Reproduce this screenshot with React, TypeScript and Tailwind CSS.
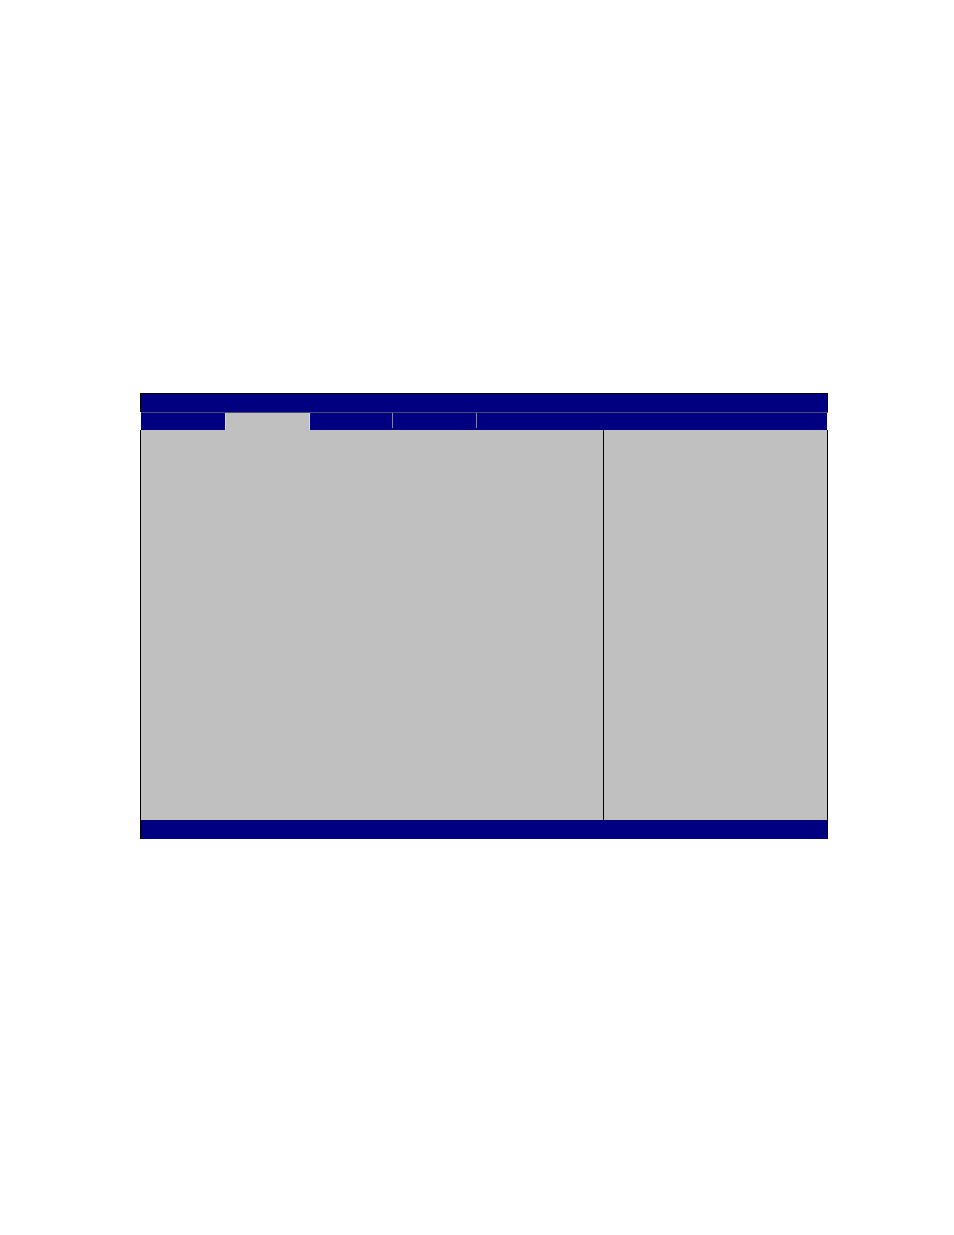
import React from "react";

export default function App() {
  return (
    <div className="w-full h-[1235px] bg-white pt-[393px] pl-[140px]" style={{ fontFamily: '"Liberation Sans", Arial, sans-serif' }}>
      <div className="w-[688px] flex flex-col">
        {/* Title bar */}
        <div className="h-[19px] bg-[#000080] border-t border-l border-r border-black" />
        <div className="h-px bg-[#4a4a70] ml-px" />
        {/* Tab row */}
        <div className="h-[17px] bg-[#000080] flex ml-px mr-px">
          <div className="w-[84px] h-full" />
          <div className="w-[85px] h-full bg-[#c0c0c0] border-l border-r border-[#dcdcdc]" />
          <div className="w-[82px] h-full" />
          <div className="w-px h-[15px] bg-[#7f7fbf]" />
          <div className="w-[83px] h-full" />
          <div className="w-px h-[15px] bg-[#7f7fbf]" />
          <div className="flex-1 h-full" />
        </div>
        {/* Body */}
        <div className="h-[390px] bg-[#c0c0c0] border-l border-r border-black flex">
          <div className="w-[463px] h-full border-r border-black" />
          <div className="flex-1 h-full" />
        </div>
        {/* Footer */}
        <div className="h-[19px] bg-[#000080] border-l border-r border-black" />
      </div>
    </div>
  );
}
